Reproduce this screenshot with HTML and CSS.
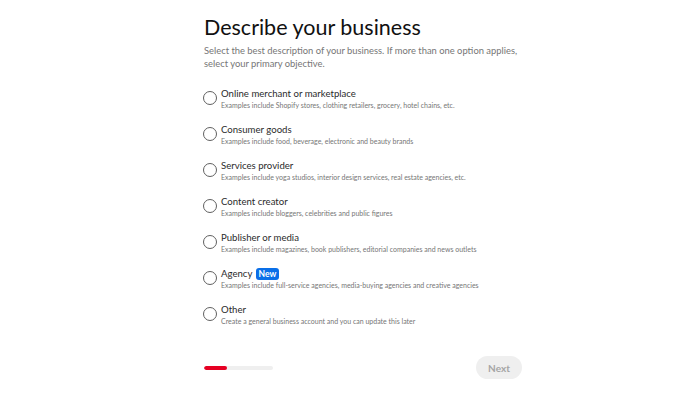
FILE: index.html
```html
<!DOCTYPE html>
<html lang="en">
<head>
    <meta charset="UTF-8">
    <meta name="viewport" content="width=device-width, initial-scale=1.0">
    <title>Describe your business</title>
    <link rel="stylesheet" href="styles.css">
</head>
<body>

    <div class="page">
        <h1 class="title">Describe your business</h1>
        <p class="subtitle">Select the best description of your business. If more than one option applies, select your primary objective.</p>

        <form class="options">
            <label class="option">
                <input type="radio" name="business">
                <span class="circle"></span>
                <span class="text">
                    <span class="name">Online merchant or marketplace</span>
                    <span class="desc">Examples include Shopify stores, clothing retailers, grocery, hotel chains, etc.</span>
                </span>
            </label>
            <label class="option">
                <input type="radio" name="business">
                <span class="circle"></span>
                <span class="text">
                    <span class="name">Consumer goods</span>
                    <span class="desc">Examples include food, beverage, electronic and beauty brands</span>
                </span>
            </label>
            <label class="option">
                <input type="radio" name="business">
                <span class="circle"></span>
                <span class="text">
                    <span class="name">Services provider</span>
                    <span class="desc">Examples include yoga studios, interior design services, real estate agencies, etc.</span>
                </span>
            </label>
            <label class="option">
                <input type="radio" name="business">
                <span class="circle"></span>
                <span class="text">
                    <span class="name">Content creator</span>
                    <span class="desc">Examples include bloggers, celebrities and public figures</span>
                </span>
            </label>
            <label class="option">
                <input type="radio" name="business">
                <span class="circle"></span>
                <span class="text">
                    <span class="name">Publisher or media</span>
                    <span class="desc">Examples include magazines, book publishers, editorial companies and news outlets</span>
                </span>
            </label>
            <label class="option">
                <input type="radio" name="business">
                <span class="circle"></span>
                <span class="text">
                    <span class="name">Agency <span class="badge">New</span></span>
                    <span class="desc">Examples include full-service agencies, media-buying agencies and creative agencies</span>
                </span>
            </label>
            <label class="option">
                <input type="radio" name="business">
                <span class="circle"></span>
                <span class="text">
                    <span class="name">Other</span>
                    <span class="desc">Create a general business account and you can update this later</span>
                </span>
            </label>
        </form>

        <div class="footer">
            <div class="progress"><div class="progress-fill" style="width: 34%"></div></div>
            <button type="button" class="next" disabled>Next</button>
        </div>
    </div>

</body>
</html>
```

FILE: styles.css
```css
body {
    margin: 0;
    font-family: "Lato", "Open Sans", sans-serif;
    color: #111;
    background: #fff;
}

.page {
    width: 318px;
    margin-left: 204px;
    padding-top: 14px;
}

.title {
    margin: 0;
    font-size: 21.5px;
    font-weight: 400;
    line-height: 26px;
}

.subtitle {
    margin: 4px 0 0;
    font-size: 9.4px;
    line-height: 13px;
    color: #767676;
}

.options {
    margin-top: 15px;
    display: flex;
    flex-direction: column;
    gap: 10px;
}

.option {
    display: flex;
    align-items: center;
    gap: 4px;
    height: 26px;
    cursor: pointer;
}

.option input {
    display: none;
}

.circle {
    width: 12px;
    height: 12px;
    margin-left: -1px;
    border: 1.5px solid #5f5f5f;
    border-radius: 50%;
    flex-shrink: 0;
}

.text {
    display: flex;
    flex-direction: column;
}

.name {
    font-size: 9.6px;
    line-height: 13px;
    color: #2b2b2b;
}

.desc {
    font-size: 7px;
    line-height: 10px;
    color: #767676;
}

.badge {
    display: inline-block;
    padding: 0 3px;
    margin-left: 1px;
    background: #0a6fe8;
    color: #fff;
    font-size: 8.5px;
    font-weight: 700;
    line-height: 12px;
    border-radius: 3px;
}

.footer {
    margin-top: 29px;
    display: flex;
    align-items: center;
    justify-content: space-between;
}

.progress {
    width: 69px;
    height: 4px;
    background: #efefef;
    border-radius: 2px;
    overflow: hidden;
}

.progress-fill {
    height: 100%;
    background: #e60023;
    border-radius: 2px;
}

.next {
    width: 46px;
    height: 23px;
    border: none;
    border-radius: 12px;
    background: #efefef;
    color: #a5a5a5;
    font-family: "Lato", sans-serif;
    font-size: 10px;
    font-weight: 700;
}
```
